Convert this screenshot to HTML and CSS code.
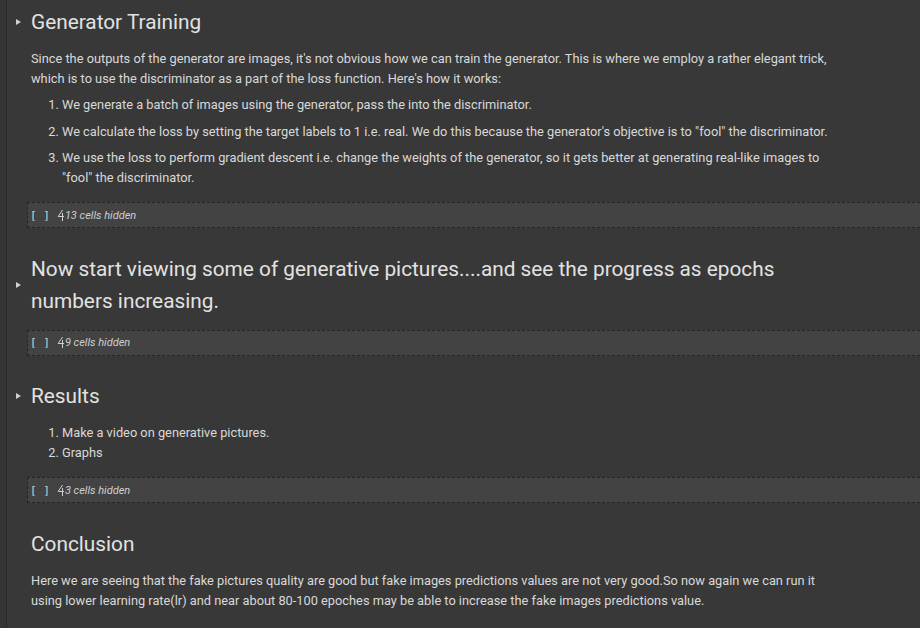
FILE: index.html
```html
<!DOCTYPE html>
<html>
<head>
<meta charset="utf-8">
<link rel="stylesheet" href="styles.css">
</head>
<body>
<div class="page">
  <div class="gutter"></div>
  <main class="notebook">
    <section class="cell">
      <div class="cell-head">
        <span class="toggle"><span class="tri"></span></span>
        <h2 class="title">Generator Training</h2>
      </div>
      <div class="content">
        <p class="para">Since the outputs of the generator are images, it's not obvious how we can train the generator. This is where we employ a rather elegant trick, which is to use the discriminator as a part of the loss function. Here's how it works:</p>
        <ol class="list spaced">
          <li>We generate a batch of images using the generator, pass the into the discriminator.</li>
          <li>We calculate the loss by setting the target labels to 1 i.e. real. We do this because the generator's objective is to "fool" the discriminator.</li>
          <li>We use the loss to perform gradient descent i.e. change the weights of the generator, so it gets better at generating real-like images to "fool" the discriminator.</li>
        </ol>
      </div>
      <div class="hidden-bar">
        <span class="brackets">[ ]</span>
        <svg class="hid-icon" width="8" height="13" viewBox="0 0 8 13"><path d="M5.5 1 L1.2 7.5 H7 M5.5 4 V12" fill="none" stroke="#cfcfcf" stroke-width="1"/></svg>
        <span class="hid-text">13 cells hidden</span>
      </div>
    </section>

    <section class="cell">
      <div class="cell-head">
        <span class="toggle"><span class="tri"></span></span>
        <h2 class="title">Now start viewing some of generative pictures....and see the progress as epochs numbers increasing.</h2>
      </div>
      <div class="hidden-bar short">
        <span class="brackets">[ ]</span>
        <svg class="hid-icon" width="8" height="13" viewBox="0 0 8 13"><path d="M5.5 1 L1.2 7.5 H7 M5.5 4 V12" fill="none" stroke="#cfcfcf" stroke-width="1"/></svg>
        <span class="hid-text">9 cells hidden</span>
      </div>
    </section>

    <section class="cell">
      <div class="cell-head">
        <span class="toggle"><span class="tri"></span></span>
        <h2 class="title">Results</h2>
      </div>
      <div class="content">
        <ol class="list">
          <li>Make a video on generative pictures.</li>
          <li>Graphs</li>
        </ol>
      </div>
      <div class="hidden-bar">
        <span class="brackets">[ ]</span>
        <svg class="hid-icon" width="8" height="13" viewBox="0 0 8 13"><path d="M5.5 1 L1.2 7.5 H7 M5.5 4 V12" fill="none" stroke="#cfcfcf" stroke-width="1"/></svg>
        <span class="hid-text">3 cells hidden</span>
      </div>
    </section>

    <section class="cell">
      <div class="cell-head">
        <span class="toggle"></span>
        <h2 class="title">Conclusion</h2>
      </div>
      <div class="content">
        <p class="para">Here we are seeing that the fake pictures quality are good but fake images predictions values are not very good.So now again we can run it using lower learning rate(lr) and near about 80-100 epoches may be able to increase the fake images predictions value.</p>
      </div>
    </section>
  </main>
</div>
</body>
</html>
```

FILE: styles.css
```css
html, body {
  margin: 0;
  padding: 0;
  background: #383838;
  overflow: hidden;
}
body {
  font-family: Roboto, "Noto Sans", "Liberation Sans", sans-serif;
  color: #d8d8d8;
  width: 920px;
  height: 628px;
}
.page {
  display: flex;
  height: 628px;
}
.gutter {
  width: 6px;
  flex: none;
  background: #353535;
  border-right: 1px solid #2a2a2a;
}
.notebook {
  flex: 1;
  padding-top: 6px;
  min-width: 0;
}
.cell {
  margin-bottom: 24.5px;
}
.cell-head {
  display: flex;
  align-items: center;
}
.toggle {
  width: 24px;
  flex: none;
  display: flex;
  padding-left: 9px;
  box-sizing: border-box;
}
.tri {
  width: 0;
  height: 0;
  border-top: 3.5px solid transparent;
  border-bottom: 3.5px solid transparent;
  border-left: 5px solid #d0d0d0;
}
.title {
  margin: 0;
  font-size: 20.8px;
  font-weight: 400;
  line-height: 32px;
  color: #e2e2e2;
  width: 800px;
}
.content {
  padding-left: 24px;
  width: 805px;
  margin-top: 11px;
  font-size: 12.8px;
  line-height: 20px;
}
.para {
  margin: 0;
}
.list {
  margin: 0;
  padding-left: 31px;
}
.list.spaced {
  margin-top: 6px;
}
.list.spaced li {
  margin-bottom: 6.5px;
}
.list.spaced li:last-child {
  margin-bottom: 0;
}
.hidden-bar {
  margin-top: 14px;
  margin-left: 20px;
  margin-right: -10px;
  height: 24px;
  background: #434343;
  border: 1px dashed #242424;
  display: flex;
  align-items: center;
  padding-left: 2px;
  font-size: 11px;
  color: #cfcfcf;
}
.hidden-bar.short {
  margin-top: 13px;
}
.brackets {
  font-family: "DejaVu Sans Mono", "Liberation Mono", monospace;
  font-size: 11px;
  white-space: pre;
  color: #d4d4d4;
}
.hid-icon {
  margin-left: 7px;
  margin-right: 0;
}
.hid-text {
  font-style: italic;
}
```
